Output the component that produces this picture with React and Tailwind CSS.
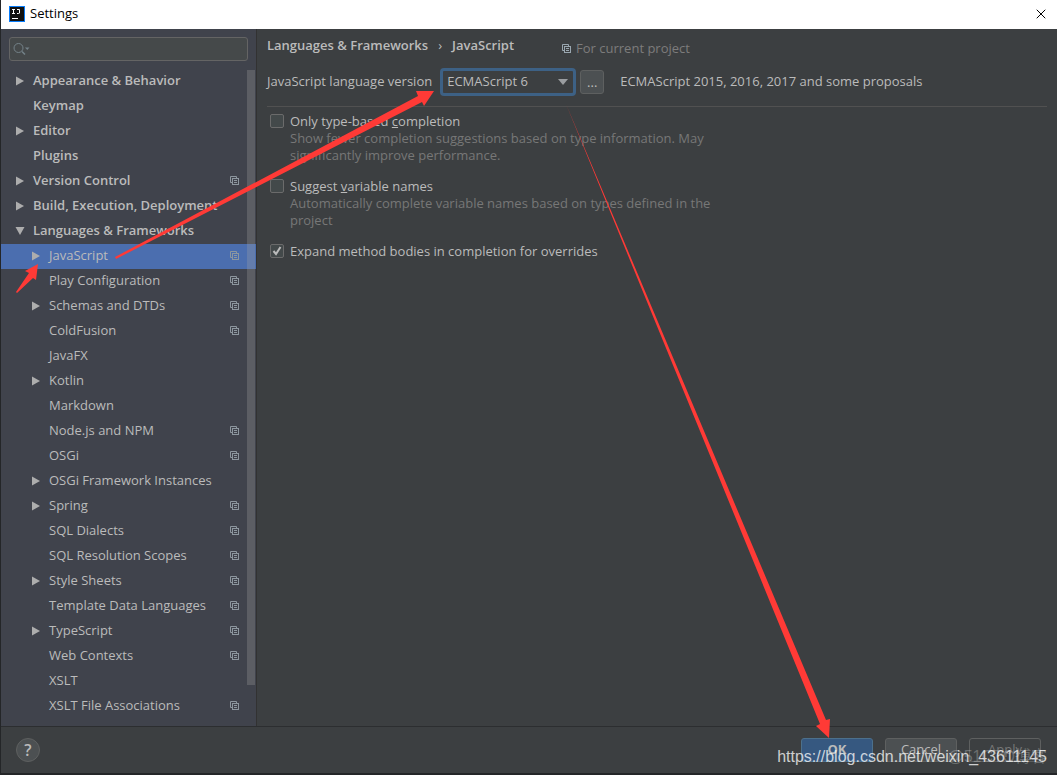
import React, { useState } from 'react';
import clsx from 'clsx';
import { X } from 'lucide-react';

const TREE = [
  { label: 'Appearance & Behavior', level: 0, arrow: 'right' },
  { label: 'Keymap', level: 0 },
  { label: 'Editor', level: 0, arrow: 'right' },
  { label: 'Plugins', level: 0 },
  { label: 'Version Control', level: 0, arrow: 'right', project: true },
  { label: 'Build, Execution, Deployment', level: 0, arrow: 'right' },
  { label: 'Languages & Frameworks', level: 0, arrow: 'down' },
  { label: 'JavaScript', level: 1, arrow: 'right', project: true },
  { label: 'Play Configuration', level: 1, project: true },
  { label: 'Schemas and DTDs', level: 1, arrow: 'right', project: true },
  { label: 'ColdFusion', level: 1, project: true },
  { label: 'JavaFX', level: 1 },
  { label: 'Kotlin', level: 1, arrow: 'right' },
  { label: 'Markdown', level: 1 },
  { label: 'Node.js and NPM', level: 1, project: true },
  { label: 'OSGi', level: 1, project: true },
  { label: 'OSGi Framework Instances', level: 1, arrow: 'right' },
  { label: 'Spring', level: 1, arrow: 'right', project: true },
  { label: 'SQL Dialects', level: 1, project: true },
  { label: 'SQL Resolution Scopes', level: 1, project: true },
  { label: 'Style Sheets', level: 1, arrow: 'right', project: true },
  { label: 'Template Data Languages', level: 1, project: true },
  { label: 'TypeScript', level: 1, arrow: 'right', project: true },
  { label: 'Web Contexts', level: 1, project: true },
  { label: 'XSLT', level: 1 },
  { label: 'XSLT File Associations', level: 1, project: true },
  { label: 'Yii', level: 1 },
];

const ProjectIcon = ({ className }) => (
  <svg viewBox="0 0 10 10" className={clsx('w-[10px] h-[10px] shrink-0', className)} fill="none" stroke="currentColor" aria-hidden="true">
    <path d="M2 6.5H.5V.5h6V2" />
    <rect x="2.5" y="2.5" width="6" height="6" />
    <path d="M4 4.5h3M4 6.5h3" />
  </svg>
);

const TreeArrow = ({ direction }) => (
  <svg viewBox="0 0 10 10" className="w-[10px] h-[10px] shrink-0" fill="#adadad" aria-hidden="true">
    {direction === 'right' && <path d="M1 0.5 9 5 1 9.5z" />}
    {direction === 'down' && <path d="M0.5 1h9L5 9z" />}
  </svg>
);

const TitleBar = () => (
  <header className="flex h-[29px] shrink-0 items-center bg-white pb-[2px] pl-2 pr-2 text-black">
    <svg viewBox="0 0 16 16" className="w-4 h-4" aria-hidden="true">
      <rect width="16" height="16" fill="#087cfa" />
      <rect x="1" y="1" width="14" height="14" fill="#111" />
      <path d="M3 3.500h3M4.500 3v5M3 7.500h3M8 3.500h2.500V7q0 .5-1 .5H8" fill="none" stroke="#fff" />
      <path d="M3 12.5h6" stroke="#fff" />
    </svg>
    <h1 className="ml-[5px] flex-1">Settings</h1>
    <button aria-label="Close">
      <X size={16} strokeWidth={1.5} />
    </button>
  </header>
);

const Sidebar = ({ selected, onSelect }) => (
  <aside className="relative flex w-[256px] shrink-0 flex-col overflow-hidden border-r border-[#323232] bg-[#40434c]">
    <div className="mx-2 mt-2 flex h-6 shrink-0 items-center rounded-[3px] border border-[#646464] bg-[#45494a] pl-[3px]">
      <svg viewBox="0 0 18 14" className="w-[18px] h-[14px]" fill="none" stroke="#748289" aria-hidden="true">
        <circle cx="5.5" cy="6" r="4.5" />
        <path d="m9 9.500 3 3" strokeWidth="1.500" />
        <path d="M12 5.500h4.500l-2.250 2.500z" fill="#748289" stroke="none" />
      </svg>
      <input type="text" aria-label="Search settings" className="min-w-0 flex-1 bg-transparent outline-none" />
    </div>
    <nav className="mt-2 min-h-0 flex-1 overflow-hidden" aria-label="Settings">
      {TREE.map((item) => (
        <button
          key={item.label}
          onClick={() => onSelect(item.label)}
          className={clsx(
            'flex h-[25px] w-full items-center gap-2 pb-[2px] pr-4 text-left',
            item.level === 0 ? 'pl-[14px] font-semibold' : 'pl-[30px]',
            selected === item.label && 'bg-[#4b6eaf]'
          )}
        >
          <TreeArrow direction={item.arrow} />
          <span className="flex-1 whitespace-nowrap">{item.label}</span>
          {item.project && <ProjectIcon className="text-[#8d979f]" />}
        </button>
      ))}
    </nav>
    <div className="absolute right-px top-[41px] bottom-[41px] w-2 bg-[#a6a6a6]/28" />
  </aside>
);

const CheckOption = ({ id, checked, onChange, label, hint }) => (
  <div className="flex gap-[6px]">
    <span className="relative mt-px h-[14px] w-[14px] shrink-0">
      <input
        id={id}
        type="checkbox"
        checked={checked}
        onChange={onChange}
        className="block h-[14px] w-[14px] appearance-none rounded-[2px] border border-[#6b6b6b] bg-[#43494a]"
      />
      {checked && (
        <svg viewBox="0 0 14 14" className="pointer-events-none absolute inset-0" fill="none" stroke="#bbbbbb" strokeWidth="2" aria-hidden="true">
          <path d="m3.500 7 2.500 3L10.500 3" />
        </svg>
      )}
    </span>
    <div>
      <label htmlFor={id} className="block leading-[17px]">{label}</label>
      {hint && <p className="max-w-[424px] leading-[17px] text-[#777777]">{hint}</p>}
    </div>
  </div>
);

const Annotations = () => (
  <svg viewBox="1 0 1057 775" className="pointer-events-none absolute left-0 top-0" width="1057" height="775" fill="#ff3a36" aria-hidden="true">
    <path d="M115 257 418 96 416 91 434 91 424 106 422 102 116 259z" />
    <path d="M16 292 29 273 25 271 38 264 36 280 33 278 17 293z" />
    <path d="M566 104 826 720 830 719 829 738 816 726 820 724z" />
  </svg>
);

const App = () => {
  const [selected, setSelected] = useState('JavaScript');
  const [options, setOptions] = useState({ typeBased: false, variableNames: false, expandBodies: true });

  const toggle = (name) => () => setOptions((prev) => ({ ...prev, [name]: !prev[name] }));

  return (
    <div className="relative flex h-screen flex-col overflow-hidden border-l border-b-2 border-[#242628] bg-[#3c3f41] font-['Open_Sans',sans-serif] text-[13px] text-[#bbbbbb]">
      <TitleBar />
      <div className="flex min-h-0 flex-1">
        <Sidebar selected={selected} onSelect={setSelected} />
        <main className="min-w-0 flex-1 pl-[10px] pr-[10px] pt-[7px]">
          <div className="flex h-5 items-center whitespace-nowrap">
            <h2 className="flex items-center font-semibold">
              Languages &amp; Frameworks
              <span className="mx-[10px] font-normal">›</span>
              JavaScript
            </h2>
            <span className="ml-12 mt-[6px] flex items-center gap-1 text-[#7c7c7c]">
              <ProjectIcon className="text-[#9aa7b0]" />
              For current project
            </span>
          </div>
          <div className="mt-3 flex items-center border-b border-[#515151] pb-[10px]">
            <label htmlFor="version">JavaScript language version</label>
            <div className="relative ml-2 shrink-0">
              <select
                id="version"
                className="block h-7 w-[136px] appearance-none rounded-[4px] border-[3px] border-[#3d6185] bg-[#3c3f41] pl-1 outline-none"
              >
                <option>ECMAScript 6</option>
              </select>
              <svg viewBox="0 0 10 6" className="pointer-events-none absolute right-2 top-[11px] w-[10px] h-[6px]" fill="#9a9da0" aria-hidden="true">
                <path d="M0 0h10L5 6z" />
              </svg>
            </div>
            <button aria-label="Configure" className="ml-1 h-6 w-6 rounded-[3px] border border-[#5e6060] bg-[#4c5052] leading-none">...</button>
            <span className="ml-4">ECMAScript 2015, 2016, 2017 and some proposals</span>
          </div>
          <div className="mt-[6px] flex flex-col gap-[14px] pl-[3px]">
            <CheckOption
              id="type-based"
              checked={options.typeBased}
              onChange={toggle('typeBased')}
              label={<>Only type-based <u>c</u>ompletion</>}
              hint="Show fewer completion suggestions based on type information. May significantly improve performance."
            />
            <CheckOption
              id="variable-names"
              checked={options.variableNames}
              onChange={toggle('variableNames')}
              label={<>Suggest <u>v</u>ariable names</>}
              hint="Automatically complete variable names based on types defined in the project"
            />
            <CheckOption
              id="expand-bodies"
              checked={options.expandBodies}
              onChange={toggle('expandBodies')}
              label="Expand method bodies in completion for overrides"
            />
          </div>
        </main>
      </div>
      <footer className="flex h-[47px] shrink-0 items-center border-t border-[#2c2e30] pl-[15px] pr-4">
        <button aria-label="Help" className="h-6 w-6 rounded-full border border-[#5e6060] bg-[#4c5052] text-[16px] font-semibold leading-none">?</button>
        <div className="ml-auto flex gap-3">
          <button className="h-6 w-[72px] rounded-[3px] border border-[#4c708c] bg-[#365880] font-bold">OK</button>
          <button className="h-6 w-[72px] rounded-[3px] border border-[#5e6060] bg-[#4c5052]">Cancel</button>
          <button disabled className="h-6 w-[72px] rounded-[3px] border border-[#5e6060] text-[#777777]">Apply</button>
        </div>
      </footer>
      <Annotations />
      <span className="pointer-events-none absolute bottom-1 right-[10px] font-['Liberation_Sans','Noto_Sans_CJK_SC',sans-serif] text-[16px] leading-6 text-white/25">@51CTO博客</span>
      <span className="pointer-events-none absolute bottom-1 right-[10px] font-['Liberation_Sans',sans-serif] text-[16px] leading-6 text-white/75">https://blog.csdn.net/weixin_43611145</span>
    </div>
  );
};

export default App;
